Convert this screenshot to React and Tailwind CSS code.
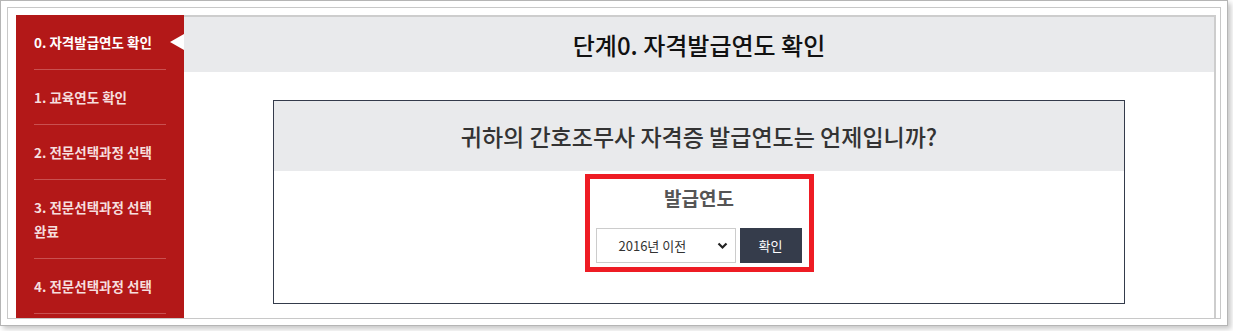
import React from 'react';

const font = { fontFamily: '"Noto Sans CJK KR", "Noto Sans", sans-serif' };

const steps = [
  { label: '0. 자격발급연도 확인', active: true },
  { label: '1. 교육연도 확인' },
  { label: '2. 전문선택과정 선택' },
  { label: ['3. 전문선택과정 선택', '완료'] },
  { label: '4. 전문선택과정 선택' },
];

function Sidebar() {
  return (
    <aside className="w-[168px] shrink-0 bg-[#b31818]">
      {steps.map((s, i) => (
        <div key={i} className="relative">
          <div
            className={`px-[18px] pt-[15px] pb-[15px] text-[13.5px] font-bold leading-[24px] ${
              s.active ? 'text-white' : 'text-[#f6dede]'
            }`}
          >
            {Array.isArray(s.label) ? (
              <>
                {s.label[0]}
                <br />
                {s.label[1]}
              </>
            ) : (
              s.label
            )}
          </div>
          <div className="mx-[18px] h-px bg-[#c95050]" />
          {s.active && (
            <span className="absolute right-0 top-[19px] h-0 w-0 border-y-[8px] border-r-[14px] border-y-transparent border-r-white" />
          )}
        </div>
      ))}
    </aside>
  );
}

function YearBox() {
  return (
    <div className="mx-auto mt-[3px] w-[229px] border-[5px] border-[#ee1c24] px-[6px] pb-[4px]">
      <div className="pt-[5px] text-center text-[19px] font-bold leading-[28px] text-[#555]">발급연도</div>
      <div className="mt-[16px] flex gap-[4px]">
        <div className="relative flex h-[35px] w-[140px] items-center border border-[#cccccc] bg-white pl-[22px] text-[13px] text-[#333]">
          2016년 이전
          <svg className="absolute right-[7px] top-[13px]" width="11" height="8" viewBox="0 0 11 8">
            <path d="M1.5 1.5 L5.5 5.5 L9.5 1.5" fill="none" stroke="#222" strokeWidth="2.2" />
          </svg>
        </div>
        <button className="h-[35px] w-[62px] bg-[#353c4b] text-[13px] text-white">확인</button>
      </div>
    </div>
  );
}

export default function App() {
  return (
    <div className="h-[331px] w-[1233px] overflow-hidden bg-white" style={font}>
      <div className="h-[326px] w-[1228px] border border-[#b5b5b5] bg-white p-[6px] shadow-[3px_3px_5px_rgba(0,0,0,0.22)]">
        <div className="h-[312px] overflow-hidden border border-[#c8c8c8] pl-[8px] pr-[4px] pt-[7px]">
          <div className="flex h-[400px]">
            <Sidebar />
            <main className="flex-1 border-r-2 border-t-2 border-[#cdcdcd]">
              <div className="flex h-[55px] items-center justify-center bg-[#e9eaec] text-[24px] font-medium text-[#111]">
                단계0. 자격발급연도 확인
              </div>
              <div className="mx-auto mt-[28px] h-[204px] w-[852px] border border-[#343b4b]">
                <div className="flex h-[70px] items-center justify-center bg-[#e9eaec] text-[23px] font-medium text-[#333]">
                  귀하의 간호조무사 자격증 발급연도는 언제입니까?
                </div>
                <YearBox />
              </div>
            </main>
          </div>
        </div>
      </div>
    </div>
  );
}
